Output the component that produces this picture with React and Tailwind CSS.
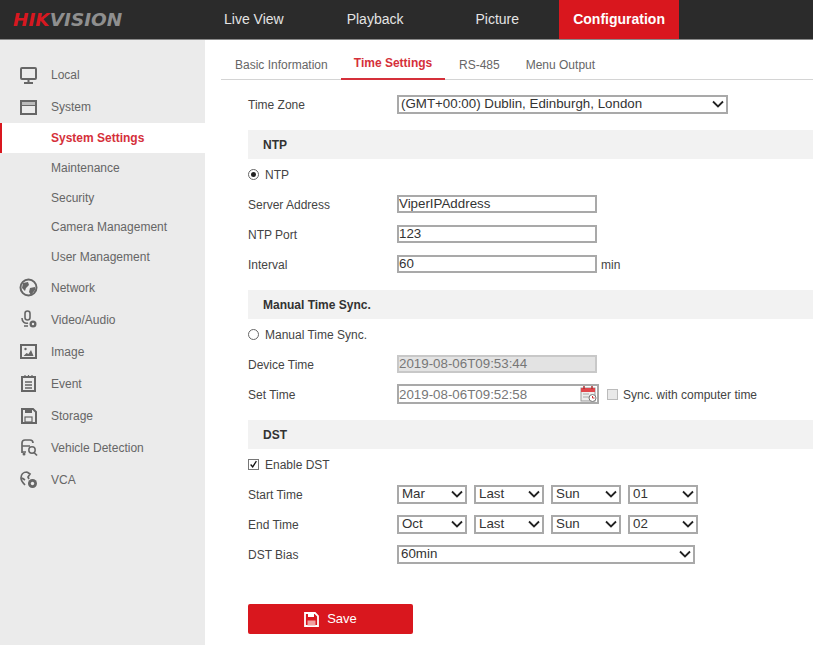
import React from "react";

const S = { fill: "none", stroke: "#666", strokeWidth: 2 };

const icons = {
  local: (
    <>
      <rect x="2" y="2" width="15" height="11" rx="1" {...S} />
      <path d="M9.5 13v3M5 17h9" {...S} />
    </>
  ),
  system: (
    <>
      <rect x="2" y="3" width="15" height="13" {...S} />
      <rect x="3" y="4" width="13" height="3" fill="#bbb" />
      <path d="M2 7.500h15" stroke="#666" strokeWidth="1" />
    </>
  ),
  network: (
    <>
      <circle cx="9.500" cy="9.500" r="8" {...S} />
      <path d="M4 5l5-1 1 3-3 3-1 3-3-3zM11 10l5-1 0 3-4 5-2-3z" fill="#666" />
    </>
  ),
  video: (
    <>
      <rect x="6" y="1" width="5" height="9" rx="2.500" fill="none" stroke="#666" strokeWidth="1.600" />
      <path d="M3 8c0 4 3 6 6 5M5 16h4" fill="none" stroke="#666" strokeWidth="1.600" />
      <circle cx="14" cy="14" r="3.500" fill="#666" />
      <circle cx="14" cy="14" r="1.200" fill="#ebebeb" />
    </>
  ),
  image: (
    <>
      <rect x="2" y="3" width="15" height="13" {...S} />
      <circle cx="6.500" cy="7" r="1.200" fill="#666" />
      <path d="M4.500 14l3-3 2 1 2.500-4 2.500 6z" fill="#666" />
    </>
  ),
  event: (
    <>
      <rect x="3" y="3" width="13" height="14" {...S} />
      <path d="M6 1v3M9.500 1v3M13 1v3" stroke="#666" strokeWidth="1.200" />
      <path d="M6 8h7M6 11h7M6 14h7" stroke="#666" strokeWidth="1.300" />
    </>
  ),
  storage: (
    <>
      <path d="M3 3h11l3 3v11H3z" {...S} />
      <rect x="6" y="3" width="7" height="4" fill="#666" />
      <rect x="6" y="11" width="7" height="5" fill="none" stroke="#666" strokeWidth="1.200" />
    </>
  ),
  vehicle: (
    <>
      <path d="M3 15V5c0-2 1-3 3-3h5c2 0 3 1 3 3M3 8h8M3 14h4" fill="none" stroke="#666" strokeWidth="1.700" />
      <circle cx="5" cy="16" r="1.500" fill="#666" />
      <circle cx="13" cy="12" r="3.200" fill="none" stroke="#666" strokeWidth="1.500" />
      <path d="M15 14.500l3 3" stroke="#666" strokeWidth="1.700" />
    </>
  ),
  vca: (
    <>
      <path d="M8 2C4 2 2 5 2 8c0 3 2 5 4 7M8 2l3 2-2 3 1 2M3 8l3 2" fill="none" stroke="#666" strokeWidth="1.700" />
      <circle cx="13.500" cy="13.500" r="4.500" fill="#666" />
      <circle cx="13.500" cy="13.500" r="1.700" fill="#ebebeb" />
    </>
  ),
};

const menuTop = [
  { key: "local", label: "Local" },
  { key: "system", label: "System" },
];
const subMenu = ["Maintenance", "Security", "Camera Management", "User Management"];
const menuBottom = [
  { key: "network", label: "Network" },
  { key: "video", label: "Video/Audio" },
  { key: "image", label: "Image" },
  { key: "event", label: "Event" },
  { key: "storage", label: "Storage" },
  { key: "vehicle", label: "Vehicle Detection" },
  { key: "vca", label: "VCA" },
];

function MenuItem({ item }) {
  return (
    <div className="flex h-8 items-center pl-[19px] text-[12px] text-[#666]">
      <svg width="19" height="19" viewBox="0 0 19 19" className="mr-[13px]">
        {icons[item.key]}
      </svg>
      {item.label}
    </div>
  );
}

function Chevron() {
  return (
    <svg width="12" height="8" viewBox="0 0 12 8" className="pointer-events-none absolute right-[4px] top-1/2 -translate-y-1/2">
      <path d="M1 1.500l5 5 5-5" fill="none" stroke="#222" strokeWidth="1.800" />
    </svg>
  );
}

function Select({ value, width, small }) {
  return (
    <div className="relative h-[19px]" style={{ width }}>
      <select
        defaultValue={value}
        className={`block h-full w-full appearance-none rounded-none border-2 border-[#a9a9a9] bg-white text-[13.33px] leading-none text-[#333] outline-none ${small ? "pl-[3px]" : "pl-[2px]"}`}
      >
        <option>{value}</option>
      </select>
      <Chevron />
    </div>
  );
}

function Row({ label, children }) {
  return (
    <div className="flex h-[30px] items-center">
      <div className="w-[149px] pt-px text-[12px] text-[#444]">{label}</div>
      {children}
    </div>
  );
}

function TextInput({ value, disabled, className = "" }) {
  return (
    <input
      readOnly
      value={value}
      className={`block h-[18px] w-[200px] border-2 border-[#a9a9a9] px-0 text-[13.33px] outline-none ${disabled ? "border-[#c8c8c8] bg-[#e3e3e3] text-[#777]" : "bg-white text-[#333]"} ${className}`}
    />
  );
}

function Section({ title }) {
  return (
    <div className="flex h-[29px] items-center bg-[#f2f2f2] pl-[15px] text-[12px] font-bold text-[#333]">{title}</div>
  );
}

function Radio({ checked, label }) {
  return (
    <div className="flex h-[30px] items-center text-[12px] text-[#444]">
      <span className="mr-[6px] flex h-[11px] w-[11px] items-center justify-center rounded-full border border-[#666] bg-white">
        {checked && <span className="h-[5px] w-[5px] rounded-full bg-[#222]" />}
      </span>
      <span className="pt-px">{label}</span>
    </div>
  );
}

function CalendarIcon() {
  return (
    <svg width="17" height="18" viewBox="0 0 17 18" className="absolute right-[2px] top-px">
      <rect x="1" y="3" width="14" height="13" fill="#eee" stroke="#999" />
      <rect x="1" y="3" width="14" height="4" fill="#e0474c" />
      <path d="M4 1v3M12 1v3" stroke="#a33" strokeWidth="1.500" />
      <path d="M3 9h6M3 12h6" stroke="#aaa" />
      <circle cx="12.500" cy="13" r="3.500" fill="#fff" stroke="#777" />
      <path d="M12.500 11v2h2" stroke="#c33" fill="none" />
    </svg>
  );
}

export default function App() {
  return (
    <div className="h-[645px] w-[813px] overflow-hidden bg-white font-['Liberation_Sans',Arial,sans-serif]">
      <header className="flex h-10 items-stretch border-b border-[#8a8a8a] bg-[#2b2b2b]">
        <div className="w-[205px] pl-[13px] pt-[9px] font-['DejaVu_Sans',sans-serif] text-[18.500px] font-bold italic leading-[22px]">
          <span className="text-[#d71820]">HIK</span>
          <span className="text-[#8f8f8f]">VISION</span>
        </div>
        <nav className="flex text-[14px] text-[#e4e4e4]">
          <div className="ml-[19px] flex items-center">Live View</div>
          <div className="ml-[63px] flex items-center">Playback</div>
          <div className="ml-[72px] flex items-center">Picture</div>
          <div className="ml-[40px] flex w-[120px] items-center justify-center bg-[#d9171e] font-bold text-white">Configuration</div>
        </nav>
      </header>

      <div className="flex h-[605px]">
        <aside className="w-[205px] bg-[#ebebeb] pt-[19px]">
          {menuTop.map((item) => (
            <MenuItem key={item.key} item={item} />
          ))}
          <div className="flex h-[30px] items-center border-l-2 border-[#d9171e] bg-white pl-[49px] text-[12px] font-bold text-[#d5303a]">
            System Settings
          </div>
          {subMenu.map((label) => (
            <div key={label} className="flex h-[29.700px] items-center pl-[51px] text-[12px] text-[#666]">
              {label}
            </div>
          ))}
          {menuBottom.map((item) => (
            <MenuItem key={item.key} item={item} />
          ))}
        </aside>

        <main className="flex-1 pl-4">
          <div className="flex h-[40px] border-b border-[#d4d4d4] text-[12px] text-[#666]">
            <div className="ml-[14px] flex w-[106px] items-center pt-[11px]">Basic Information</div>
            <div className="-mb-px flex w-[104px] items-center justify-center border-b-2 border-[#d5303a] pt-[8px] font-bold text-[#d5303a]">
              Time Settings
            </div>
            <div className="ml-[14px] flex items-center pt-[11px]">RS-485</div>
            <div className="ml-[26px] flex items-center pt-[11px]">Menu Output</div>
          </div>

          <div className="pl-[27px] pt-[9px]">
            <Row label="Time Zone">
              <Select value="(GMT+00:00) Dublin, Edinburgh, London" width="331px" />
            </Row>
            <div className="h-[11px]" />
            <Section title="NTP" />
            <Radio checked label="NTP" />
            <Row label="Server Address">
              <TextInput value="ViperIPAddress" />
            </Row>
            <Row label="NTP Port">
              <TextInput value="123" />
            </Row>
            <Row label="Interval">
              <TextInput value="60" />
              <span className="ml-[4px] pt-px text-[12px] text-[#444]">min</span>
            </Row>
            <div className="h-[11px]" />
            <Section title="Manual Time Sync." />
            <Radio label="Manual Time Sync." />
            <Row label="Device Time">
              <TextInput disabled value="2019-08-06T09:53:44" />
            </Row>
            <Row label="Set Time">
              <div className="relative h-[20px] w-[202px]">
                <TextInput value="2019-08-06T09:52:58" className="h-full w-full text-[#777]" />
                <CalendarIcon />
              </div>
              <span className="ml-[8px] mr-[5px] h-[11px] w-[11px] border border-[#bbb] bg-[#e9e9e9]" />
              <span className="pt-px text-[12px] text-[#444]">Sync. with computer time</span>
            </Row>
            <div className="h-[11px]" />
            <Section title="DST" />
            <div className="flex h-[30px] items-center text-[12px] text-[#444]">
              <span className="mr-[6px] flex h-[11px] w-[11px] items-center justify-center border border-[#777] bg-white">
                <svg width="11" height="11" viewBox="0 0 11 11">
                  <path d="M2 5.500l2.500 3L9 1.500" fill="none" stroke="#111" strokeWidth="1.600" />
                </svg>
              </span>
              <span className="pt-px">Enable DST</span>
            </div>
            <Row label="Start Time">
              <div className="flex gap-[7px]">
                <Select small value="Mar" width="70px" />
                <Select small value="Last" width="70px" />
                <Select small value="Sun" width="70px" />
                <Select small value="01" width="70px" />
              </div>
            </Row>
            <Row label="End Time">
              <div className="flex gap-[7px]">
                <Select small value="Oct" width="70px" />
                <Select small value="Last" width="70px" />
                <Select small value="Sun" width="70px" />
                <Select small value="02" width="70px" />
              </div>
            </Row>
            <Row label="DST Bias">
              <Select value="60min" width="298px" />
            </Row>
            <button className="mt-[35px] flex h-[30px] w-[165px] items-center justify-center rounded-[2px] bg-[#d9171e] text-[13px] text-white">
              <svg width="15" height="15" viewBox="0 0 15 15" className="mr-[8px]">
                <path d="M1 1h10l3 3v10H1z" fill="none" stroke="#fff" strokeWidth="1.800" />
                <rect x="4" y="1" width="6" height="4" fill="#fff" />
                <rect x="3.500" y="8.500" width="8" height="5" fill="#f0a0a0" />
              </svg>
              Save
            </button>
          </div>
        </main>
      </div>
    </div>
  );
}
